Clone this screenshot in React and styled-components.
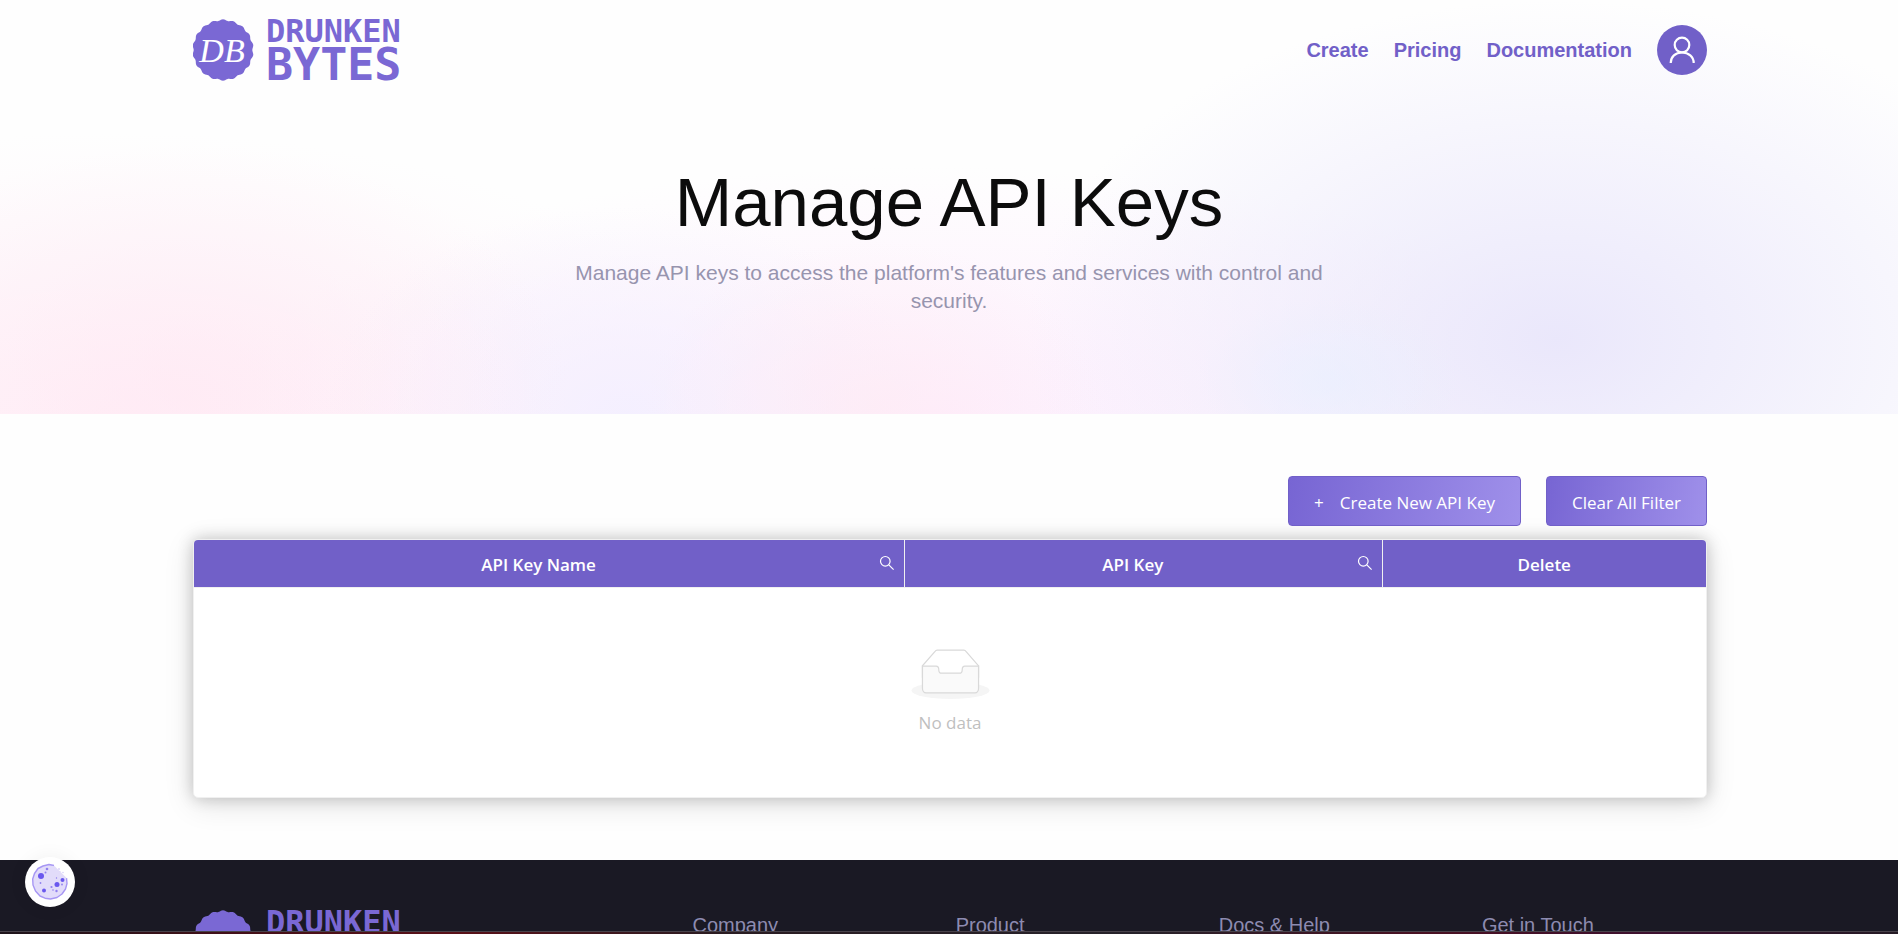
import React from "react";
import styled, { createGlobalStyle } from "styled-components";

const GlobalStyle = createGlobalStyle`
  *, *::before, *::after { box-sizing: border-box; }
  html { scrollbar-width: none; }
  body {
    margin: 0;
    background: #fefefe;
    color: #0c0c0c;
    font-family: "Liberation Sans", Arial, sans-serif;
    font-size: 20px;
  }
`;

const purple = "#7160c8";
const uiFont = `"Open Sans", "Noto Sans", sans-serif`;
const gutter = "0 191px 0 193px";

const Hero = styled.div`
  padding-bottom: 99px;
  background:
    radial-gradient(ellipse 20% 60% at 10% 95%, rgba(255, 230, 242, 0.6), rgba(255, 232, 246, 0) 100%),
    radial-gradient(ellipse 12% 40% at 46% 98%, rgba(255, 234, 242, 0.6), rgba(255, 232, 246, 0) 100%),
    radial-gradient(ellipse 16% 50% at 33% 100%, rgba(243, 239, 255, 0.9), rgba(243, 239, 255, 0) 100%),
    radial-gradient(ellipse 7% 20% at 70% 92%, rgba(232, 240, 255, 0.6), rgba(230, 240, 255, 0) 100%),
    radial-gradient(ellipse 28% 82% at 82% 82%, rgba(233, 230, 251, 0.95), rgba(240, 240, 255, 0) 100%),
    radial-gradient(ellipse 38% 60% at 49% 100%, rgba(253, 237, 253, 0.95), rgba(253, 240, 253, 0) 100%),
    radial-gradient(ellipse 34% 68% at 6% 100%, rgba(255, 239, 247, 0.9), rgba(255, 240, 250, 0) 100%),
    #fefefe;
`;

const Header = styled.header`
  display: flex;
  align-items: center;
  justify-content: space-between;
  height: 100px;
  padding: ${gutter};
`;

const Nav = styled.nav`
  display: flex;
  align-items: center;
  gap: 25px;
`;

const NavLink = styled.a`
  color: ${purple};
  font-weight: 700;
  text-decoration: none;
`;

const Avatar = styled.button`
  width: 50px;
  height: 50px;
  padding: 0;
  border: 0;
  border-radius: 50%;
  background: ${purple};
  cursor: pointer;
`;

const Intro = styled.div`
  max-width: 760px;
  margin: 0 auto;
  padding-top: 63px;
  text-align: center;
`;

const Title = styled.h1`
  margin: 0;
  font-size: 69px;
  font-weight: 400;
  line-height: 80px;
`;

const Subtitle = styled.p`
  margin: 16px 0 0;
  color: #9794ae;
  font-size: 21px;
  line-height: 28px;
`;

const LogoLink = styled.a`
  display: flex;
  align-items: flex-start;
  gap: 11px;
  height: 62px;
  color: #7a68d4;
  text-decoration: none;
`;

const Wordmark = styled.span`
  display: flex;
  flex-direction: column;
  font-family: "DejaVu Sans Mono", monospace;
  font-weight: 700;
`;

const WordTop = styled.span`
  font-size: 32px;
  line-height: 24px;
`;

const WordBottom = styled.span`
  font-size: 45px;
  line-height: 44px;
`;

const Main = styled.main`
  padding: ${gutter};
`;

const Actions = styled.div`
  display: flex;
  justify-content: flex-end;
  gap: 25px;
  padding: 62px 0 13px;
`;

const ActionButton = styled.button`
  display: flex;
  align-items: center;
  gap: 16px;
  height: 50px;
  padding: 2px 25px 0;
  border: 1px solid ${purple};
  border-radius: 4px;
  background: linear-gradient(100deg, #7765d3, #9f90ea);
  color: #fff;
  font-family: ${uiFont};
  font-size: 17px;
  cursor: pointer;
`;

const TableCard = styled.div`
  overflow: hidden;
  margin-bottom: 62px;
  border: 1px solid #f0f0f0;
  border-radius: 5px;
  background: #fff;
  box-shadow: 0 0 16px rgba(0, 0, 0, 0.2), 0 6px 30px rgba(0, 0, 0, 0.12);
`;

const Table = styled.table`
  width: 100%;
  border-collapse: collapse;
  table-layout: fixed;
  font-family: ${uiFont};
  font-size: 17px;
`;

const HeadCell = styled.th`
  width: ${(p) => p.$width};
  height: 47px;
  padding: 2px 8px 0;
  background: ${purple};
  color: #fff;
  font-weight: 600;
  & + & { border-left: 1px solid #f0f0f0; }
`;

const HeadContent = styled.div`
  display: flex;
  align-items: center;
`;

const HeadLabel = styled.span`
  flex: 1;
`;

const SearchButton = styled.button`
  display: flex;
  padding: 0 1px 2px 4px;
  border: 0;
  background: none;
  cursor: pointer;
`;

const EmptyCell = styled.td`
  height: 210px;
  padding: 0;
  border-top: 1px solid #f0f0f0;
  color: #bfbfbf;
  text-align: center;
  vertical-align: middle;
`;

const Empty = styled.div`
  display: flex;
  flex-direction: column;
  align-items: center;
  gap: 12px;
  line-height: 24px;
`;

const Footer = styled.footer`
  display: grid;
  grid-template-columns: 41fr repeat(4, 20fr);
  gap: 38px;
  padding: ${gutter};
  background: #1a1924;
`;

const FooterItem = styled.div`
  padding: 50px 0;
`;

const FooterHeading = styled.h2`
  margin: 0;
  color: #8d8bb0;
  font-size: 20px;
  font-weight: 400;
  line-height: 30px;
`;

const CookieButton = styled.button`
  position: fixed;
  left: 25px;
  bottom: 27px;
  width: 50px;
  height: 50px;
  padding: 6px;
  border: 0;
  border-radius: 50%;
  background: #fff;
  box-shadow: 0 0 20px rgba(0, 0, 0, 0.06);
  cursor: pointer;
`;

const BottomStrip = styled.div`
  position: fixed;
  left: 0;
  right: 0;
  bottom: 0;
  height: 3px;
  border-top: 1px solid #49434b;
  background: linear-gradient(90deg, #1d141b, #421018 12%, #5a1018 24%, #2a1c22 38%, #26222a 60%, #4a1022 75%, #3c1030 88%, #241a24);
`;

function scallop(cx, cy, radius, depth, lobes) {
  const points = [];
  for (let i = 0; i < 360; i += 2) {
    const a = (i * Math.PI) / 180;
    const r = radius + depth * Math.cos(lobes * a);
    points.push(`${(cx + r * Math.sin(a)).toFixed(2)} ${(cy - r * Math.cos(a)).toFixed(2)}`);
  }
  return `M${points.join("L")}Z`;
}

const badge = scallop(30, 31, 30, 0.7, 18);

function Logo() {
  return (
    <LogoLink href="#home" aria-label="Drunken Bytes">
      <svg width="62" height="62" viewBox="0 0 62 62">
        <path d={badge} fill="currentColor" />
        <text x="29" y="43" textAnchor="middle" fill="#fff" fontFamily="Liberation Serif, serif" fontStyle="italic" fontSize="34">DB</text>
      </svg>
      <Wordmark>
        <WordTop>DRUNKEN</WordTop>
        <WordBottom>BYTES</WordBottom>
      </Wordmark>
    </LogoLink>
  );
}

function SearchIcon() {
  return (
    <svg width="16" height="16" viewBox="0 0 16 16" fill="none" stroke="#fff" strokeWidth="1.2">
      <circle cx="6.3" cy="6.3" r="4.8" />
      <path d="M9.8 9.8L14.6 14.6" />
    </svg>
  );
}

function EmptyIcon() {
  return (
    <svg width="79" height="50" viewBox="0 0 64 41">
      <g transform="translate(0 1)" fill="none" fillRule="evenodd">
        <ellipse fill="#f5f5f5" cx="32" cy="33" rx="32" ry="7" />
        <g stroke="#d9d9d9" fillRule="nonzero">
          <path d="M55 12.76L44.854 1.258C44.367.474 43.656 0 42.907 0H21.093c-.749 0-1.46.474-1.947 1.257L9 12.761V22h46v-9.24z" />
          <path d="M41.613 15.931c0-1.605.994-2.93 2.227-2.931H55v18.137C55 33.26 53.68 35 52.05 35h-40.1C10.32 35 9 33.259 9 31.137V13h11.16c1.233 0 2.227 1.323 2.227 2.928v.022c0 1.605 1.005 2.901 2.237 2.901h14.752c1.232 0 2.237-1.308 2.237-2.913v-.007z" fill="#fafafa" />
        </g>
      </g>
    </svg>
  );
}

function CookieIcon() {
  return (
    <svg width="38" height="38" viewBox="0 0 38 38">
      <path d="M23 2.5L18 1.5 12 3 7 5.5 3.5 10.5 1.7 16 2 22 4.5 28 9 33 14 35.2 19.5 36 26 34.5 31 31 34.5 26 36 20.5 35.5 15" fill="#e2dcfa" stroke="#a797f4" strokeWidth="1.4" strokeLinejoin="round" />
      <path d="M22 2.5L24.500 7 26.500 9.500 30 11.500 32.500 14.500 35.500 15 30 24 16 12Z" fill="#e2dcfa" />
      <g fill="#6a58ee">
        <circle cx="10" cy="13" r="3" />
        <circle cx="26" cy="21.5" r="2.5" />
        <circle cx="31.5" cy="17" r="2" />
        <circle cx="13" cy="27.5" r="2" />
      </g>
      <g fill="#9080ee">
        <circle cx="16" cy="6" r="1.3" />
        <circle cx="14.5" cy="9.5" r="1" />
        <circle cx="9.5" cy="20" r="0.9" />
        <circle cx="20.5" cy="24" r="1.1" />
        <circle cx="25.5" cy="28" r="1.2" />
        <circle cx="22" cy="27" r="0.8" />
        <circle cx="25.5" cy="15" r="0.7" />
        <circle cx="31" cy="21.5" r="0.9" />
      </g>
      <g fill="#d9d1fa">
        <circle cx="28" cy="6" r="0.9" />
        <circle cx="32" cy="9.5" r="0.8" />
        <circle cx="29" cy="8.5" r="0.6" />
      </g>
    </svg>
  );
}

const columns = ["Company", "Product", "Docs & Help", "Get in Touch"];

export default function App() {
  return (
    <>
      <GlobalStyle />
      <Hero>
        <Header>
          <Logo />
          <Nav>
            <NavLink href="#create">Create</NavLink>
            <NavLink href="#pricing">Pricing</NavLink>
            <NavLink href="#documentation">Documentation</NavLink>
            <Avatar aria-label="Account">
              <svg width="50" height="50" viewBox="0 0 50 50" fill="none" stroke="#fff" strokeWidth="2.2">
                <circle cx="25" cy="20" r="7.3" />
                <path d="M13.7 38C13.7 31.5 18.5 27.5 25 27.5S36.7 31.5 36.7 38" />
              </svg>
            </Avatar>
          </Nav>
        </Header>
        <Intro>
          <Title>Manage API Keys</Title>
          <Subtitle>Manage API keys to access the platform's features and services with control and security.</Subtitle>
        </Intro>
      </Hero>
      <Main>
        <Actions>
          <ActionButton><span>+</span><span>Create New API Key</span></ActionButton>
          <ActionButton>Clear All Filter</ActionButton>
        </Actions>
        <TableCard>
          <Table>
            <thead>
              <tr>
                <HeadCell $width="47%">
                  <HeadContent>
                    <HeadLabel>API Key Name</HeadLabel>
                    <SearchButton aria-label="Search by name"><SearchIcon /></SearchButton>
                  </HeadContent>
                </HeadCell>
                <HeadCell $width="auto">
                  <HeadContent>
                    <HeadLabel>API Key</HeadLabel>
                    <SearchButton aria-label="Search by key"><SearchIcon /></SearchButton>
                  </HeadContent>
                </HeadCell>
                <HeadCell $width="324px">Delete</HeadCell>
              </tr>
            </thead>
            <tbody>
              <tr>
                <EmptyCell colSpan={3}>
                  <Empty>
                    <EmptyIcon />
                    <span>No data</span>
                  </Empty>
                </EmptyCell>
              </tr>
            </tbody>
          </Table>
        </TableCard>
      </Main>
      <Footer>
        <FooterItem><Logo /></FooterItem>
        {columns.map((name) => (
          <FooterItem key={name}><FooterHeading>{name}</FooterHeading></FooterItem>
        ))}
      </Footer>
      <CookieButton aria-label="Cookie settings"><CookieIcon /></CookieButton>
      <BottomStrip />
    </>
  );
}
